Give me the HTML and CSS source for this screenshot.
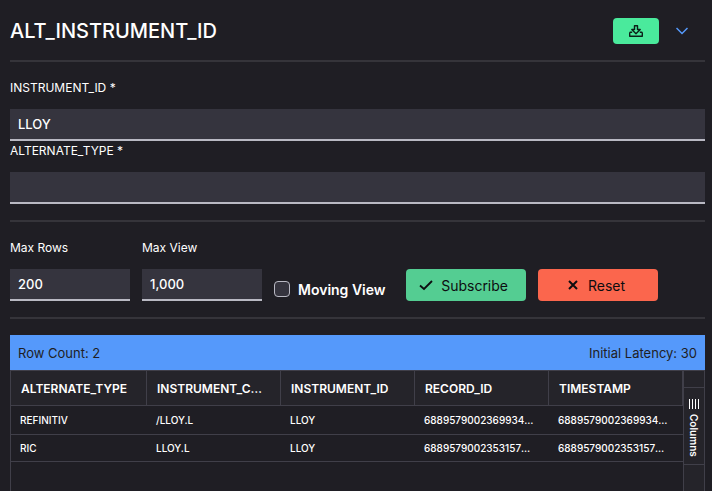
FILE: index.html
```html
<!DOCTYPE html>
<html lang="en">
<head>
<meta charset="utf-8">
<title>ALT_INSTRUMENT_ID</title>
<link rel="stylesheet" href="styles.css">
</head>
<body>
<main class="panel">
  <header class="panel-header">
    <h1 class="title">ALT_INSTRUMENT_ID</h1>
    <button class="download" type="button" aria-label="Download">
      <svg width="14" height="12" viewBox="0 0 14 12" fill="none" stroke="currentColor" stroke-width="1.400" stroke-linejoin="round">
        <path d="M5.500 .7h3v3.800h2.700L7 8.700 2.800 4.500h2.700z"/>
        <path d="M3.200 7.200H1.200L.7 8v3.300h12.600V8l-.5-.8h-2"/>
      </svg>
    </button>
    <button class="collapse" type="button" aria-label="Collapse">
      <svg width="12" height="8" viewBox="0 0 12 8" fill="none" stroke="currentColor" stroke-width="1.500"><path d="M.5 1 6 6.500 11.500 1"/></svg>
    </button>
  </header>

  <section class="section">
    <div class="field">
      <label for="instrument">INSTRUMENT_ID *</label>
      <input id="instrument" type="text" value="LLOY">
    </div>
    <div class="field">
      <label for="alternate">ALTERNATE_TYPE *</label>
      <input id="alternate" type="text">
    </div>
  </section>

  <section class="section controls">
    <div class="field small">
      <label for="rows">Max Rows</label>
      <input id="rows" type="text" value="200">
    </div>
    <div class="field small">
      <label for="view">Max View</label>
      <input id="view" type="text" value="1,000">
    </div>
    <label class="check"><input type="checkbox">Moving View</label>
    <div class="actions">
      <button class="action subscribe" type="button">
        <svg width="14" height="12" viewBox="0 0 14 12" fill="none" stroke="currentColor" stroke-width="1.800"><path d="M1 6.500 5 10 13 2"/></svg>
        Subscribe
      </button>
      <button class="action reset" type="button">
        <svg width="14" height="12" viewBox="0 0 14 12" fill="none" stroke="currentColor" stroke-width="2"><path d="M3 2l8 8M11 2l-8 8"/></svg>
        Reset
      </button>
    </div>
  </section>

  <section class="results">
    <div class="status"><span>Row Count: 2</span><span>Initial Latency: 30</span></div>
    <div class="grid">
      <table>
        <thead>
          <tr><th class="first">ALTERNATE_TYPE</th><th>INSTRUMENT_CODE</th><th>INSTRUMENT_ID</th><th>RECORD_ID</th><th>TIMESTAMP</th></tr>
        </thead>
        <tbody>
          <tr><td>REFINITIV</td><td>/LLOY.L</td><td>LLOY</td><td>6889579002369934000</td><td>6889579002369934000</td></tr>
          <tr><td>RIC</td><td>LLOY.L</td><td>LLOY</td><td>6889579002353157000</td><td>6889579002353157000</td></tr>
        </tbody>
      </table>
      <aside class="sidebar">
        <button class="columns" type="button">
          <svg width="12" height="10" viewBox="0 0 12 10" stroke="currentColor" stroke-width="1"><path d="M1.500 0v10M4.500 0v10M7.500 0v10M10.500 0v10"/></svg>
          <span>Columns</span>
        </button>
      </aside>
    </div>
  </section>
</main>
</body>
</html>
```

FILE: styles.css
```css
* {
  box-sizing: border-box;
}

body {
  margin: 0;
  background: #1f1e24;
  color: #fff;
  font-family: Inter, "Liberation Sans", sans-serif;
  font-size: 12px;
}

button,
input {
  font-family: inherit;
}

button {
  padding: 0;
  border: 0;
  cursor: pointer;
}

svg {
  display: block;
  flex: none;
}

.panel {
  display: flex;
  flex-direction: column;
  min-height: 100vh;
  padding: 0 7px 0 10px;
}

.panel-header {
  display: flex;
  align-items: center;
  height: 62px;
  padding-top: 2px;
  border-bottom: 2px solid #35343a;
}

.title {
  flex: 1;
  margin: 0;
  font-size: 20px;
  font-weight: 500;
}

.download {
  display: flex;
  align-items: center;
  justify-content: center;
  width: 46px;
  height: 26px;
  border-radius: 4px;
  background: #4aea9c;
  color: #0c2018;
}

.collapse {
  display: flex;
  justify-content: center;
  width: 46px;
  background: none;
  color: #5599fb;
}

.section {
  padding: 16px 0;
  border-bottom: 2px solid #35343a;
}

.field label {
  display: block;
  padding-bottom: 12px;
  line-height: 19px;
}

.field input {
  display: block;
  width: 100%;
  height: 32px;
  padding: 0 8px;
  border: 0;
  border-bottom: 2px solid #b9b9c3;
  background: #35343e;
  color: #fff;
  font-size: 13px;
  font-weight: 500;
}

.controls {
  display: flex;
  align-items: flex-end;
  gap: 12px;
}

.small {
  width: 120px;
}

.check {
  display: flex;
  align-items: center;
  gap: 8px;
  height: 24px;
  font-size: 14px;
  font-weight: 600;
}

.check input {
  appearance: none;
  width: 16px;
  height: 16px;
  margin: 0;
  border: 1px solid #b9b9c3;
  border-radius: 4px;
  background: #35343e;
}

.actions {
  display: flex;
  gap: 12px;
  margin-left: 8px;
}

.action {
  display: flex;
  align-items: center;
  justify-content: center;
  gap: 8px;
  width: 120px;
  height: 32px;
  padding-right: 4px;
  border-radius: 4px;
  color: #0d0d10;
  font-size: 14px;
}

.subscribe {
  background: #54cd92;
}

.reset {
  background: #fb664d;
}

.results {
  display: flex;
  flex: 1;
  flex-direction: column;
  padding-top: 16px;
}

.status {
  display: flex;
  align-items: center;
  justify-content: space-between;
  height: 35px;
  padding: 0 8px;
  background: #5599fb;
  color: #1f1e24;
  font-size: 13px;
}

.grid {
  display: flex;
  flex: 1;
  align-items: flex-start;
  border: 1px solid #403f49;
  border-bottom: 0;
}

table {
  flex: 1;
  width: 0;
  border-collapse: separate;
  border-spacing: 0;
  table-layout: fixed;
}

th,
td {
  overflow: hidden;
  border-bottom: 1px solid #403f49;
  text-align: left;
  text-overflow: ellipsis;
  white-space: nowrap;
}

th {
  height: 35px;
  padding: 0 10px;
  border-right: 1px solid #403f49;
  background: #25242a;
  font-size: 12px;
  font-weight: 600;
}

.first {
  width: 136px;
}

td {
  height: 29px;
  padding: 0 14px 0 9px;
  font-size: 10px;
  font-weight: 500;
}

tr:last-child td {
  height: 27px;
}

.sidebar {
  align-self: stretch;
  width: 21px;
  padding-top: 16px;
  border-left: 1px solid #403f49;
  background: #25242a;
}

.columns {
  display: flex;
  flex-direction: column;
  align-items: center;
  gap: 5px;
  width: 100%;
  height: 78px;
  padding-top: 11px;
  border: solid #403f49;
  border-width: 1px 0;
  background: none;
  color: #fff;
  font-size: 10px;
  font-weight: 600;
}

.columns span {
  writing-mode: vertical-rl;
}
```
